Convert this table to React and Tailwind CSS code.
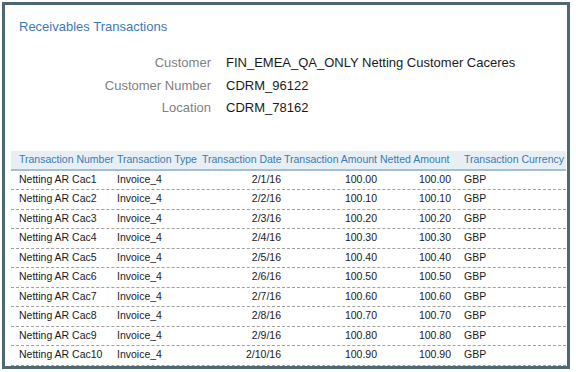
import React from "react";

const rows = Array.from({ length: 10 }, (_, i) => ({
    number: `Netting AR Cac${i + 1}`,
    type: "Invoice_4",
    date: `2/${i + 1}/16`,
    amount: (100 + i / 10).toFixed(2),
    netted: (100 + i / 10).toFixed(2),
    currency: "GBP",
}));

const details = [
    { label: "Customer", value: "FIN_EMEA_QA_ONLY Netting Customer Caceres" },
    { label: "Customer Number", value: "CDRM_96122" },
    { label: "Location", value: "CDRM_78162" },
];

const App = () => {
    return (
        <div className="w-[576px] h-[372px] bg-white p-[2px] font-['Liberation_Sans',Arial,sans-serif]">
            <div className="h-[367px] w-[568px] border-[3px] border-[#4e6872] bg-white flex flex-col">
                {/* Title */}
                <h2 className="pt-[14px] pl-[14px] text-[13px] leading-[16px] text-[#3b7ab3]">
                    Receivables Transactions
                </h2>

                {/* Customer details */}
                <div className="mt-[17px] grid grid-cols-[206px_1fr] gap-x-[15px] text-[13px] leading-[22.5px]">
                    {details.map((d) => (
                        <React.Fragment key={d.label}>
                            <span className="text-right text-[#7f7f7f]">{d.label}</span>
                            <span className="text-[#1a1a1a]">{d.value}</span>
                        </React.Fragment>
                    ))}
                </div>

                {/* Table */}
                <div className="mt-[31px] ml-[6px] w-[555px] text-[10.5px]">
                    <div className="flex h-[20px] items-center bg-[#e7eef4] border-b-2 border-[#a3bfd6] text-[#3b7ab3] whitespace-nowrap">
                        <div className="w-[104px] pl-[8px]">Transaction Number</div>
                        <div className="w-[85px] pl-[2px]">Transaction Type</div>
                        <div className="w-[83px] pl-[2px]">Transaction Date</div>
                        <div className="w-[97px] pl-[1px]">Transaction Amount</div>
                        <div className="w-[75px]">Netted Amount</div>
                        <div className="w-[110px] pl-[9px]">Transaction Currency</div>
                    </div>
                    {rows.map((r) => (
                        <div
                            key={r.number}
                            className="flex h-[19.5px] items-center border-b border-dashed border-[#a0a0a0] text-[#1a1a1a] whitespace-nowrap"
                        >
                            <div className="w-[104px] pl-[8px]">{r.number}</div>
                            <div className="w-[85px] pl-[2px]">{r.type}</div>
                            <div className="w-[83px] pr-[2px] text-right">{r.date}</div>
                            <div className="w-[97px] pr-[3px] text-right">{r.amount}</div>
                            <div className="w-[75px] pr-[4px] text-right">{r.netted}</div>
                            <div className="w-[110px] pl-[9px]">{r.currency}</div>
                        </div>
                    ))}
                </div>
            </div>
        </div>
    );
};

export default App;
